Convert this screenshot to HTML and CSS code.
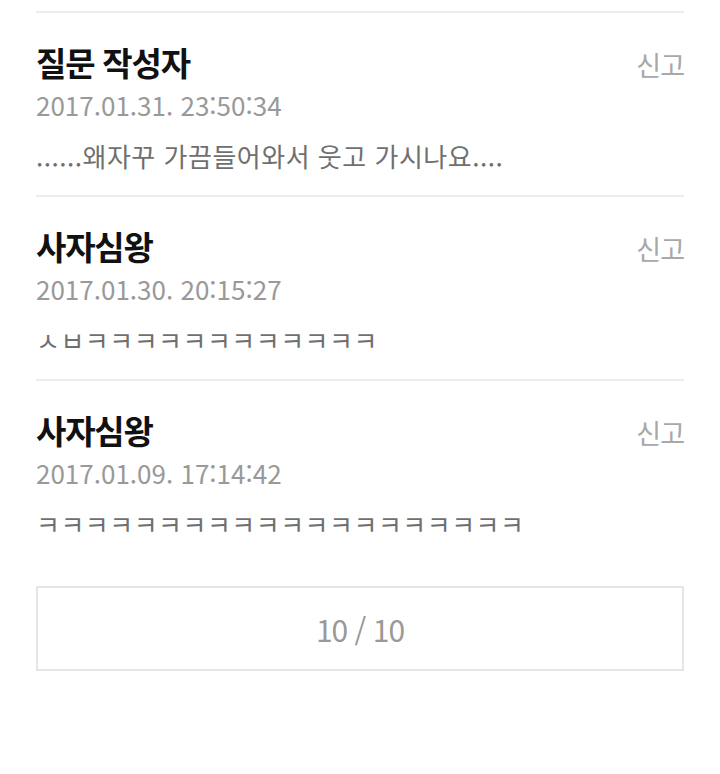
FILE: index.html
```html
<!DOCTYPE html>
<html lang="ko">
<head>
  <meta charset="UTF-8"/>
  <meta name="viewport" content="width=device-width, initial-scale=1.0"/>
  <title>댓글</title>
  <link rel="stylesheet" href="styles.css">
</head>
<body>
<div class="wrap">
  <ul class="comment_list">
    <li class="comment">
      <div class="comment_head">
        <strong class="comment_name">질문 작성자</strong>
        <a href="#" class="report_btn">신고</a>
      </div>
      <p class="comment_date">2017.01.31. 23:50:34</p>
      <p class="comment_text">......왜자꾸 가끔들어와서 웃고 가시나요....</p>
    </li>
    <li class="comment">
      <div class="comment_head">
        <strong class="comment_name">사자심왕</strong>
        <a href="#" class="report_btn">신고</a>
      </div>
      <p class="comment_date">2017.01.30. 20:15:27</p>
      <p class="comment_text">ㅅㅂㅋㅋㅋㅋㅋㅋㅋㅋㅋㅋㅋㅋ</p>
    </li>
    <li class="comment">
      <div class="comment_head">
        <strong class="comment_name">사자심왕</strong>
        <a href="#" class="report_btn">신고</a>
      </div>
      <p class="comment_date">2017.01.09. 17:14:42</p>
      <p class="comment_text">ㅋㅋㅋㅋㅋㅋㅋㅋㅋㅋㅋㅋㅋㅋㅋㅋㅋㅋㅋㅋ</p>
    </li>
  </ul>
  <div class="paging">10 / 10</div>
</div>
</body>
</html>
```

FILE: styles.css
```css
body {
    margin: 0;
    background-color: #fff;
    font-family: "Noto Sans CJK KR", "Noto Sans", sans-serif;
}

.wrap {
    padding: 11px 36px 0;
}

.comment_list {
    list-style: none;
    margin: 0;
    padding: 0;
}

.comment {
    border-top: 2px solid #ececec;
    padding: 27px 0 9px;
}

.comment_head {
    display: flex;
    justify-content: space-between;
    align-items: center;
    height: 44px;
}

.comment_name {
    font-size: 33px;
    font-weight: bold;
    letter-spacing: -1.2px;
    color: #111;
    line-height: 44px;
}

.report_btn {
    font-size: 27px;
    color: #a8a8a8;
    text-decoration: none;
    letter-spacing: -1px;
    line-height: 44px;
    margin-top: 6px;
}

.comment_date {
    margin: 0;
    font-size: 26px;
    line-height: 42px;
    color: #999;
}

.comment_text {
    margin: 0;
    font-size: 26px;
    line-height: 60px;
    color: #6f6f6f;
    letter-spacing: 0.5px;
}

.paging {
    margin-top: 23px;
    height: 81px;
    border: 2px solid #e6e6e6;
    display: flex;
    justify-content: center;
    align-items: center;
    font-size: 30px;
    color: #999;
    letter-spacing: -1px;
}
```
